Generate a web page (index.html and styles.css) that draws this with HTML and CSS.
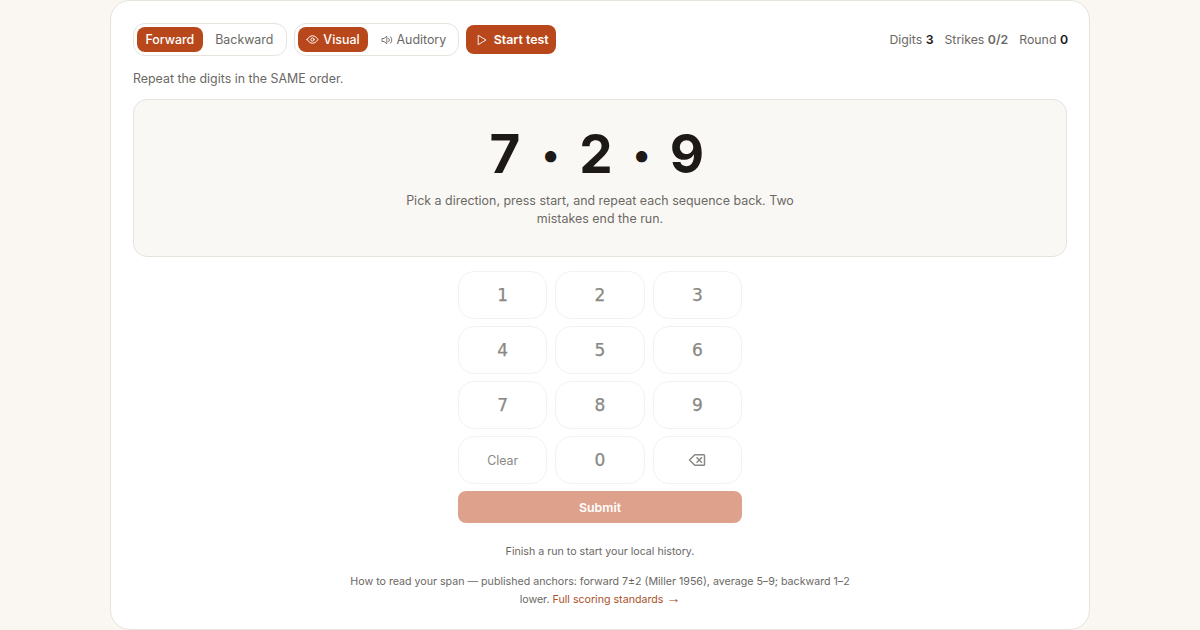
FILE: index.html
```html
<!DOCTYPE html>
<html lang="en">
<head>
    <meta charset="UTF-8">
    <meta name="viewport" content="width=device-width, initial-scale=1.0">
    <title>Digit span test</title>
    <link rel="stylesheet" href="styles.css">
</head>
<body>
    <main class="card">
        <div class="toolbar">
            <div class="toolbar__left">
                <div class="segment">
                    <button class="segment__btn segment__btn--active">Forward</button>
                    <button class="segment__btn segment__btn--wide">Backward</button>
                </div>
                <div class="segment">
                    <button class="segment__btn segment__btn--active">
                        <svg class="icon icon--eye" viewBox="0 0 24 24"><path d="M2 12s3.6-7 10-7 10 7 10 7-3.6 7-10 7-10-7-10-7z"/><circle cx="12" cy="12" r="3"/></svg>
                        Visual
                    </button>
                    <button class="segment__btn">
                        <svg class="icon" viewBox="0 0 24 24"><path d="M11 5 6 9H2v6h4l5 4z"/><path d="M15.5 8.5a5 5 0 0 1 0 7"/><path d="M19 5.5a10 10 0 0 1 0 13"/></svg>
                        Auditory
                    </button>
                </div>
                <button class="start">
                    <svg class="icon" viewBox="0 0 24 24"><path d="M5 3l15 9-15 9z"/></svg>
                    Start test
                </button>
            </div>
            <div class="stats">
                <span>Digits <b class="stats__dark">3</b></span>
                <span>Strikes <b>0/2</b></span>
                <span>Round <b class="stats__dark">0</b></span>
            </div>
        </div>

        <p class="hint">Repeat the digits in the SAME order.</p>

        <section class="display">
            <div class="digits">
                <span class="digits__num">7</span>
                <span class="digits__dot">•</span>
                <span class="digits__num">2</span>
                <span class="digits__dot">•</span>
                <span class="digits__num">9</span>
            </div>
            <p class="display__text">Pick a direction, press start, and repeat each sequence back. Two mistakes end the run.</p>
        </section>

        <div class="pad">
            <div class="keys">
                <button class="key">1</button>
                <button class="key">2</button>
                <button class="key">3</button>
                <button class="key">4</button>
                <button class="key">5</button>
                <button class="key">6</button>
                <button class="key">7</button>
                <button class="key">8</button>
                <button class="key">9</button>
                <button class="key key--small">Clear</button>
                <button class="key">0</button>
                <button class="key">
                    <svg class="key__icon" viewBox="0 0 24 24"><path d="M21 5H9l-7 7 7 7h12a1 1 0 0 0 1-1V6a1 1 0 0 0-1-1z"/><path d="M18 9l-6 6"/><path d="M12 9l6 6"/></svg>
                </button>
            </div>
            <button class="submit">Submit</button>
        </div>

        <p class="history">Finish a run to start your local history.</p>
        <p class="note">How to read your span — published anchors: forward 7±2 (Miller 1956), average 5–9; backward 1–2 lower. <a class="note__link" href="#">Full scoring standards <span class="note__arrow">→</span></a></p>
    </main>
</body>
</html>
```

FILE: styles.css
```css
* {
    box-sizing: border-box;
}
body {
    margin: 0;
    height: 630px;
    overflow: hidden;
    background-color: #faf7f2;
    font-family: Inter, "Liberation Sans", sans-serif;
    color: #6b6864;
}
button {
    font-family: inherit;
    border: 0;
    background: none;
}
p {
    margin: 0;
}
.card {
    width: 980px;
    height: 630px;
    margin: 0 auto;
    padding: 22px 22px 0;
    background-color: #fff;
    border: 1px solid #e7e3dc;
    border-radius: 20px;
}
.toolbar {
    display: flex;
    justify-content: space-between;
    align-items: center;
}
.toolbar__left {
    display: flex;
    align-items: center;
    gap: 7px;
}
.segment {
    display: flex;
    gap: 4px;
    padding: 3px;
    border: 1px solid #e7e3dc;
    border-radius: 12px;
}
.segment__btn {
    display: flex;
    align-items: center;
    gap: 4px;
    height: 25px;
    padding: 0 8.5px;
    border-radius: 8px;
    font-size: 12.4px;
    color: #6b6864;
}
.segment__btn--wide {
    padding-right: 9.5px;
}
.segment__btn--active {
    background-color: #b8481b;
    font-weight: 500;
    color: #fff;
}
.icon {
    width: 12px;
    height: 12px;
    fill: none;
    stroke: currentColor;
    stroke-width: 1.8;
    stroke-linecap: round;
    stroke-linejoin: round;
}
.icon--eye {
    width: 13px;
    height: 13px;
}
.start {
    display: flex;
    align-items: center;
    gap: 6px;
    height: 29px;
    padding: 0 7px 0 10px;
    background-color: #b8481b;
    border-radius: 8px;
    font-size: 12.4px;
    font-weight: 600;
    color: #fff;
}
.stats {
    display: flex;
    gap: 11px;
    margin-right: -1px;
    font-size: 12.3px;
}
.stats b {
    font-weight: 600;
}
.stats__dark {
    color: #1c1917;
}
.hint {
    margin-top: 14px;
    font-size: 12.4px;
    line-height: 18px;
}
.display {
    display: flex;
    flex-direction: column;
    align-items: center;
    height: 158px;
    margin-top: 11px;
    padding-top: 24px;
    background-color: #faf8f5;
    border: 1px solid #e7e3dc;
    border-radius: 14px;
}
.digits {
    display: flex;
    justify-content: center;
    align-items: center;
    height: 60px;
    padding-right: 8px;
    color: #1c1917;
}
.digits__num {
    width: 36px;
    font-size: 53px;
    font-weight: 700;
    line-height: 60px;
    text-align: center;
}
.digits__dot {
    width: 55px;
    font-size: 36px;
    line-height: 60px;
    text-align: center;
}
.display__text {
    width: 420px;
    margin-top: 8px;
    font-size: 12.45px;
    line-height: 18px;
    text-align: center;
}
.pad {
    width: 284px;
    margin: 14px auto 0;
}
.keys {
    display: grid;
    grid-template-columns: repeat(3, 1fr);
    gap: 7px 8px;
}
.key {
    display: flex;
    align-items: center;
    justify-content: center;
    height: 48px;
    border: 1px solid #f4f2ef;
    border-radius: 16px;
    font-family: "DejaVu Sans", sans-serif;
    font-size: 17px;
    -webkit-text-stroke: 0.25px #8a8883;
    color: #8a8883;
}
.key--small {
    font-family: Inter, "Liberation Sans", sans-serif;
    font-size: 12.4px;
    -webkit-text-stroke: 0;
}
.key__icon {
    width: 18px;
    height: 18px;
    fill: none;
    stroke: currentColor;
    stroke-width: 2;
    stroke-linecap: round;
    stroke-linejoin: round;
}
.submit {
    display: block;
    width: 100%;
    height: 32px;
    margin-top: 7px;
    background-color: #dea18c;
    border-radius: 8px;
    font-size: 12.4px;
    font-weight: 600;
    color: #fff;
}
.history {
    margin-top: 20px;
    font-size: 10.65px;
    line-height: 17px;
    text-align: center;
}
.note {
    width: 520px;
    margin: 13px auto 0;
    font-size: 10.65px;
    line-height: 18px;
    text-align: center;
}
.note__link {
    color: #a9522b;
    text-decoration: none;
}
.note__arrow {
    font-family: "Liberation Sans", sans-serif;
    font-size: 14px;
    line-height: 14px;
}
```
